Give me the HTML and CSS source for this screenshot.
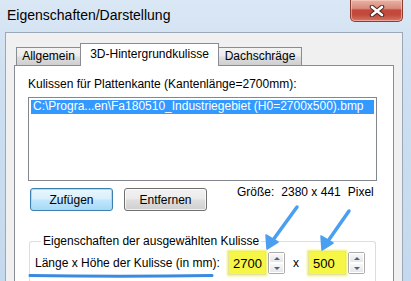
FILE: index.html
```html
<!DOCTYPE html>
<html lang="de">
<head>
    <meta charset="UTF-8">
    <title>Eigenschaften/Darstellung</title>
    <link rel="stylesheet" href="styles.css">
</head>
<body>
    <div class="window">
        <div class="title-bar">
            <div class="title-text">Eigenschaften/Darstellung</div>
            <div class="close-button">
                <svg width="18" height="12" viewBox="0 0 18 12">
                    <path d="M4 2 L14 10 M14 2 L4 10" stroke="#4a2620" stroke-width="4.5" stroke-linecap="round"/>
                    <path d="M4 2 L14 10 M14 2 L4 10" stroke="#ffffff" stroke-width="2.6" stroke-linecap="round"/>
                </svg>
            </div>
        </div>

        <div class="client">
            <div class="tabs">
                <div class="tab tab-first">Allgemein</div>
                <div class="tab active">3D-Hintergrundkulisse</div>
                <div class="tab tab-last">Dachschräge</div>
            </div>

            <div class="panel">
                <div class="list-label">Kulissen für Plattenkante (Kantenlänge=2700mm):</div>
                <div class="listbox">
                    <div class="list-item selected">C:\Progra...en\Fa180510_Industriegebiet (H0=2700x500).bmp</div>
                </div>

                <div class="button-row">
                    <button class="btn default">Zufügen</button>
                    <button class="btn">Entfernen</button>
                    <div class="size-info">
                        <span>Größe:</span>
                        <span class="size-value">2380 x 441</span>
                        <span>Pixel</span>
                    </div>
                </div>

                <fieldset class="groupbox">
                    <legend>Eigenschaften der ausgewählten Kulisse</legend>
                    <div class="dim-row">
                        <span class="dim-label">Länge x Höhe der Kulisse (in mm):</span>
                        <div class="spin-field first">
                            <div class="edit">2700</div>
                            <div class="spinner">
                                <div class="spin-btn"><span class="arrow-up"></span></div>
                                <div class="spin-btn"><span class="arrow-down"></span></div>
                            </div>
                        </div>
                        <span class="times">x</span>
                        <div class="spin-field">
                            <div class="edit">500</div>
                            <div class="spinner">
                                <div class="spin-btn"><span class="arrow-up"></span></div>
                                <div class="spin-btn"><span class="arrow-down"></span></div>
                            </div>
                        </div>
                    </div>
                </fieldset>
            </div>
        </div>

        <!-- annotations painted over the screenshot -->
        <svg class="annotations" width="411" height="281" viewBox="0 0 411 281">
            <path d="M30 275.5 Q120 277 212 275.5" stroke="#3a8be0" stroke-width="3" fill="none" stroke-linecap="round"/>
            <g stroke="#4b9ff0" stroke-width="3.5" stroke-linecap="round" fill="#4b9ff0">
                <line x1="297" y1="207" x2="273" y2="240"/>
                <polygon points="267,249 266,235 278,242" stroke-width="1.5" stroke-linejoin="round"/>
                <line x1="349" y1="211" x2="328" y2="241"/>
                <polygon points="322,250 321,236 333,243" stroke-width="1.5" stroke-linejoin="round"/>
            </g>
        </svg>
    </div>
</body>
</html>
```

FILE: styles.css
```css
* {
    margin: 0;
    padding: 0;
    box-sizing: border-box;
}

body {
    font-family: 'Liberation Sans', Arial, sans-serif;
    font-size: 12px;
    color: #000;
    background: #cfe0f2;
}

.window {
    position: relative;
    width: 411px;
    height: 281px;
    overflow: hidden;
    background: linear-gradient(180deg, #dae7f5 0%, #cddff1 30%, #c5d9ee 100%);
}

.title-bar {
    display: flex;
    height: 32px;
}

.title-text {
    font-size: 14px;
    padding: 7px 0 0 7px;
    color: #000;
}

.close-button {
    margin-left: auto;
    margin-right: 8px;
    width: 53px;
    height: 22px;
    border: 1px solid #8c3d33;
    border-top: none;
    border-radius: 0 0 5px 5px;
    background: linear-gradient(180deg, #e9b2a4 0%, #d88b7b 40%, #c4473a 48%, #c24a3c 70%, #d77565 100%);
    box-shadow: inset 0 0 0 1px rgba(255, 220, 210, 0.5);
    display: flex;
    align-items: center;
    justify-content: center;
}

.client {
    margin-left: 5px;
    width: 398px;
    height: 249px;
    background: #f0f0f0;
    border: 1px solid #9aa8b8;
    border-bottom: none;
    padding: 10px 8px 0 8px;
}

/* tabs */
.tabs {
    display: flex;
    align-items: flex-end;
    height: 22px;
    padding-left: 2px;
    position: relative;
    z-index: 1;
}

.tab {
    height: 18px;
    line-height: 16px;
    text-align: center;
    border: 1px solid #898c95;
    border-bottom: none;
    background: linear-gradient(180deg, #f3f3f3 0%, #ebebeb 45%, #dddddd 55%, #cfcfcf 100%);
}

.tab-first {
    width: 64px;
    border-right: none;
}

.tab-last {
    width: 83px;
    border-left: none;
}

.tab.active {
    width: 139px;
    height: 23px;
    margin-bottom: -1px;
    line-height: 20px;
    background: #fff;
}

.panel {
    width: 380px;
    height: 216px;
    background: #fff;
    border: 1px solid #898c95;
    border-bottom: none;
    padding: 11px 0 0 13px;
}

.list-label {
    line-height: 14px;
}

.listbox {
    margin-top: 6px;
    width: 349px;
    height: 84px;
    border: 1px solid #828790;
    padding: 2px;
}

.list-item {
    line-height: 13px;
    height: 14px;
    padding-left: 2px;
    white-space: nowrap;
    overflow: hidden;
}

.list-item.selected {
    background: #3399ff;
    color: #fff;
}

.button-row {
    display: flex;
    align-items: flex-start;
    margin-top: 7px;
    padding-left: 2px;
}

.btn {
    width: 83px;
    height: 23px;
    margin-right: 11px;
    font-family: inherit;
    font-size: 12px;
    color: #000;
    border: 1px solid #707070;
    border-radius: 3px;
    background: linear-gradient(180deg, #f2f2f2 0%, #ebebeb 45%, #dddddd 55%, #cfcfcf 100%);
    box-shadow: inset 0 0 0 1px rgba(255, 255, 255, 0.7);
}

.btn.default {
    border-color: #3c7fb1;
    background: linear-gradient(180deg, #eaf6fd 0%, #d9f0fc 45%, #bee6fd 55%, #a7d9f5 100%);
    box-shadow: inset 0 0 0 1px #9be0f7;
}

.size-info {
    margin-left: 19px;
    margin-top: -3px;
    display: flex;
    gap: 7px;
    line-height: 14px;
}

/* group box */
.groupbox {
    margin: 23px 0 0 1px;
    width: 347px;
    height: 60px;
    border: 1px solid #d5dfe5;
    border-bottom: none;
    border-radius: 3px 3px 0 0;
    padding: 0 0 0 5px;
}

.groupbox legend {
    margin-left: 6px;
    padding: 0 2px;
    line-height: 14px;
}

.dim-row {
    display: flex;
    align-items: center;
    margin-top: 3px;
}

.dim-label {
    width: 193px;
}

.spin-field {
    display: flex;
    align-items: center;
}

.edit {
    width: 38px;
    height: 24px;
    line-height: 24px;
    padding-left: 4px;
    font-size: 13px;
    background: #f6f646;
    border: 1px solid #e4e4a0;
    box-shadow: 0 0 2px 1px #f3f35a;
}

.spinner {
    margin-left: 2px;
    width: 17px;
    height: 22px;
    border: 1px solid #acacac;
    border-radius: 2px;
    display: flex;
    flex-direction: column;
    background: #fff;
}

.spin-btn {
    flex: 1;
    display: flex;
    align-items: center;
    justify-content: center;
    background: linear-gradient(180deg, #f7f7f7, #e6e6e6);
    border: 1px solid #fff;
}

.arrow-up,
.arrow-down {
    width: 0;
    height: 0;
    border-left: 3px solid transparent;
    border-right: 3px solid transparent;
}

.arrow-up {
    border-bottom: 3px solid #4d6185;
}

.arrow-down {
    border-top: 3px solid #4d6185;
}

.times {
    margin: 0 9px 0 8px;
}

.annotations {
    position: absolute;
    left: 0;
    top: 0;
    pointer-events: none;
}
```
